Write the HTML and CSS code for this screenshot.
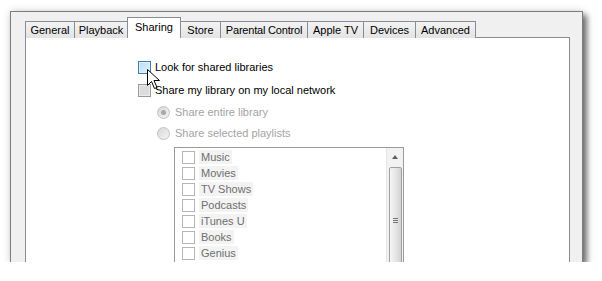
FILE: index.html
```html
<!DOCTYPE html>
<html lang="en">
<head>
    <meta charset="UTF-8">
    <title>Sharing</title>
    <link rel="stylesheet" href="styles.css">
</head>
<body>

    <div class="window">
        <div class="tabs">
            <div class="tab tab-general">General</div>
            <div class="tab tab-playback">Playback</div>
            <div class="tab tab-sharing selected">Sharing</div>
            <div class="tab tab-store">Store</div>
            <div class="tab tab-parental">Parental Control</div>
            <div class="tab tab-appletv">Apple TV</div>
            <div class="tab tab-devices">Devices</div>
            <div class="tab tab-advanced">Advanced</div>
        </div>

        <div class="panel">
            <div class="row first">
                <span class="check hover"></span>
                <span class="label">Look for shared libraries</span>
            </div>
            <div class="row second">
                <span class="check grey"></span>
                <span class="label">Share my library on my local network</span>
            </div>

            <div class="row radio-row first-radio">
                <span class="radio checked"></span>
                <span class="label muted">Share entire library</span>
            </div>
            <div class="row radio-row second-radio">
                <span class="radio"></span>
                <span class="label muted">Share selected playlists</span>
            </div>

            <!-- lista playlist -->
            <div class="listbox">
                <div class="items">
                    <div class="item"><span class="check"></span><span class="item-label">Music</span></div>
                    <div class="item"><span class="check"></span><span class="item-label">Movies</span></div>
                    <div class="item"><span class="check"></span><span class="item-label">TV Shows</span></div>
                    <div class="item"><span class="check"></span><span class="item-label">Podcasts</span></div>
                    <div class="item"><span class="check"></span><span class="item-label">iTunes U</span></div>
                    <div class="item"><span class="check"></span><span class="item-label">Books</span></div>
                    <div class="item"><span class="check"></span><span class="item-label">Genius</span></div>
                    <div class="item"><span class="check"></span></div>
                </div>
                <div class="scrollbar">
                    <div class="arrow-up"></div>
                    <div class="thumb"><span class="grip"></span></div>
                </div>
            </div>

            <!-- puntatore del mouse -->
            <svg class="cursor" width="13" height="21" viewBox="0 0 13 21">
                <path d="M0.5 0.5 L0.5 16.5 L4.5 12.5 L7.5 19.5 L10 18.5 L7 11.5 L12.5 11.5 Z" fill="#fff" stroke="#000" stroke-width="1"/>
            </svg>
        </div>
    </div>

</body>
</html>
```

FILE: styles.css
```css
body {
    margin: 0;
    background: #fff;
    font-family: "Liberation Sans", Arial, sans-serif;
    font-size: 11px;
    color: #000;
}

.window {
    margin: 11px 0 0 10px;
    width: 573px;
    height: 251px;
    padding: 5px 0 0 14px;
    box-sizing: border-box;
    background: #f0f0f0;
    border: 1px solid #7d7d7d;
    border-bottom: none;
    box-shadow: 4px 4px 6px rgba(0, 0, 0, 0.55), 0 0 8px rgba(0, 0, 0, 0.15);
    overflow: hidden;
    display: flex;
    flex-direction: column;
}

/* Linguette */
.tabs {
    display: flex;
    align-items: flex-end;
    height: 21px;
    margin-right: 12px;
    position: relative;
    z-index: 1;
}

.tab {
    height: 17px;
    line-height: 16px;
    text-align: center;
    box-sizing: border-box;
    border: 1px solid #898c95;
    border-bottom: none;
    border-left: none;
    background: linear-gradient(#f3f3f3, #e3e3e3);
    color: #000;
    white-space: nowrap;
}

.tab:first-child {
    border-left: 1px solid #898c95;
}

.tab.selected {
    height: 21px;
    line-height: 19px;
    background: #fff;
    border-left: 1px solid #898c95;
    margin-left: -1px;
}

.tab-general { width: 50px; }
.tab-playback { width: 53px; }
.tab-sharing { width: 54px; }
.tab-store { width: 40px; }
.tab-parental { width: 87px; letter-spacing: -0.2px; }
.tab-appletv { width: 56px; }
.tab-devices { width: 52px; }
.tab-advanced { width: 60px; }

.panel {
    flex: 1;
    margin-right: 12px;
    margin-top: -1px;
    background: #fff;
    border: 1px solid #898c95;
    border-bottom: none;
    padding: 23px 0 0 112px;
    position: relative;
}

.row {
    display: flex;
    align-items: center;
    height: 13px;
}

.row.second {
    margin-top: 10px;
}

.label {
    margin-left: 4px;
    line-height: 13px;
}

.muted {
    color: #a3a3a3;
}

.check {
    width: 11px;
    height: 11px;
    border: 1px solid #8f8f8f;
    background: #fff;
    flex: none;
}

.check.hover {
    border-color: #3c7fb1;
    background: linear-gradient(135deg, #b9dcf5, #e4f3fd);
    box-shadow: inset 0 0 0 1px #deeefb;
}

.check.grey {
    border-color: #9a9a9a;
    background: #dcdcdc;
    box-shadow: inset 0 0 0 1px #ececec;
}

.radio-row {
    padding-left: 19px;
}

.first-radio {
    margin-top: 9px;
}

.second-radio {
    margin-top: 8px;
}

.radio {
    width: 11px;
    height: 11px;
    border-radius: 50%;
    border: 1px solid #c2c2c2;
    background: linear-gradient(135deg, #d8d8d8, #f4f4f4);
    flex: none;
    position: relative;
}

.radio.checked::after {
    content: "";
    position: absolute;
    left: 3px;
    top: 3px;
    width: 5px;
    height: 5px;
    border-radius: 50%;
    background: #a8a8a8;
}

.radio-row .label {
    margin-left: 5px;
}

/* Lista */
.listbox {
    margin: 7px 0 0 36px;
    width: 230px;
    height: 160px;
    border: 1px solid #9b9b9b;
    box-sizing: border-box;
    display: flex;
    background: #fff;
}

.items {
    flex: 1;
    padding: 1px 0 0 7px;
}

.item {
    display: flex;
    align-items: center;
    height: 16px;
}

.item .check {
    border-color: #b5b5b5;
}

.item-label {
    margin-left: 4px;
    padding: 0 2px;
    line-height: 14px;
    background: #f3f3f3;
    color: #6f6f6f;
}

.scrollbar {
    width: 16px;
    background: #f2f2f2;
    border-left: 1px solid #e6e6e6;
    display: flex;
    flex-direction: column;
    align-items: center;
}

.arrow-up {
    margin-top: 7px;
    width: 0;
    height: 0;
    border-left: 3px solid transparent;
    border-right: 3px solid transparent;
    border-bottom: 4px solid #606060;
}

.thumb {
    margin-top: 8px;
    width: 13px;
    height: 120px;
    border: 1px solid #a0a0a0;
    border-radius: 2px;
    box-sizing: border-box;
    background: linear-gradient(90deg, #f6f6f6, #e2e2e2 60%, #d2d2d2);
    position: relative;
}

.grip {
    position: absolute;
    left: 3px;
    top: 50px;
    width: 5px;
    height: 5px;
    border-top: 1px solid #777;
    border-bottom: 1px solid #777;
    box-sizing: border-box;
}

.grip::after {
    content: "";
    position: absolute;
    left: 0;
    top: 1px;
    width: 5px;
    border-top: 1px solid #777;
}

.cursor {
    position: absolute;
    left: 121px;
    top: 31px;
}
```
